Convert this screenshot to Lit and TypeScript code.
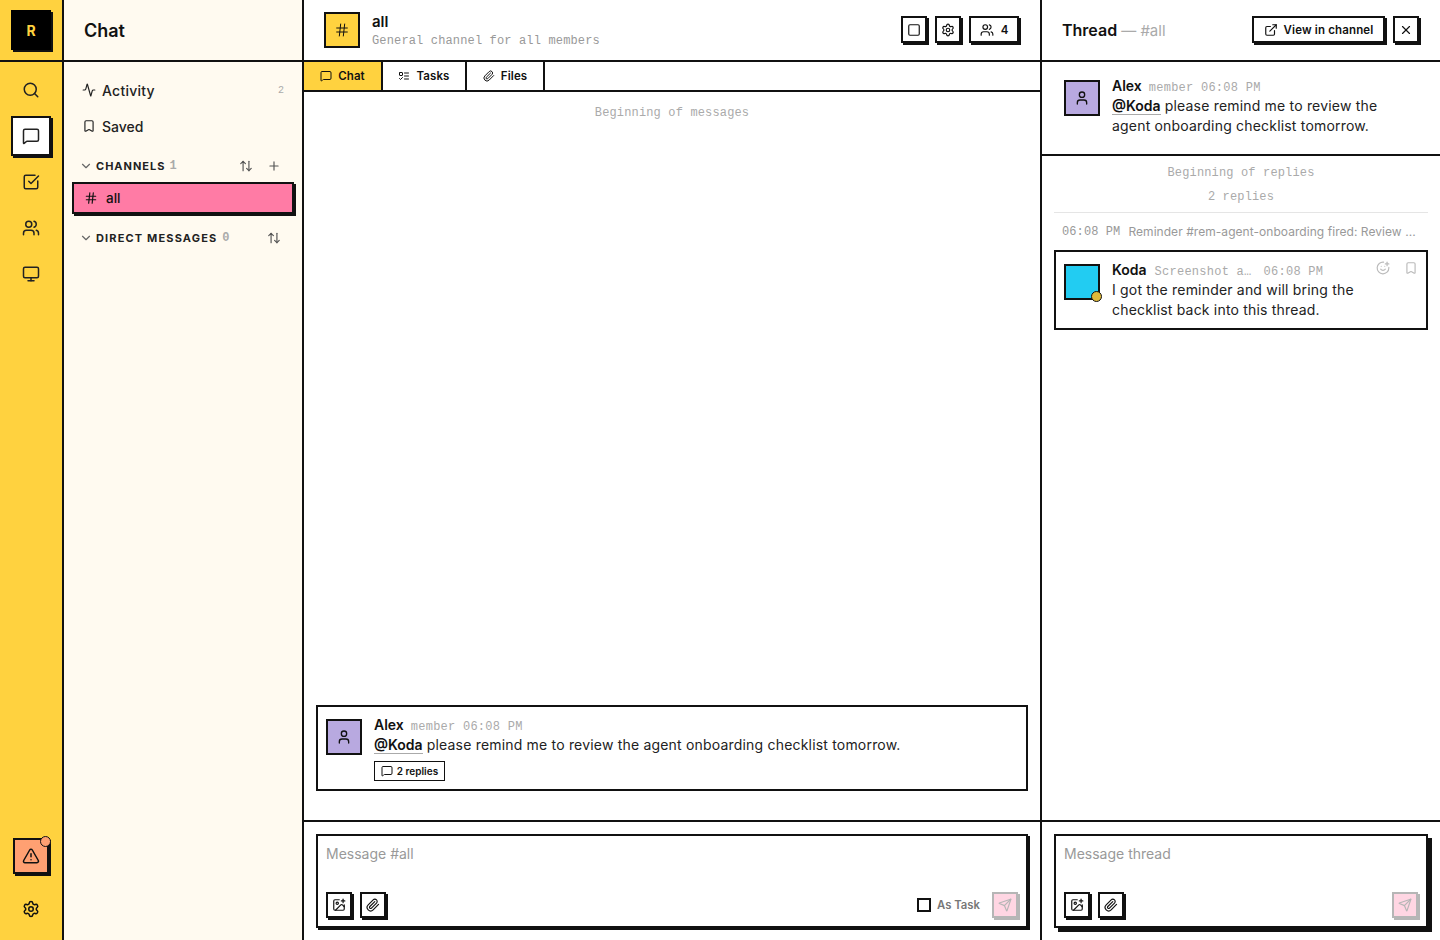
import { LitElement, html, css, svg } from "lit";
import { customElement } from "lit/decorators.js";

const I = {
  search: svg`<circle cx="11" cy="11" r="8"/><path d="m21 21-4.3-4.3"/>`,
  msg: svg`<path d="M22 17a2 2 0 0 1-2 2H6.828a2 2 0 0 0-1.414.586l-2.202 2.202A.71.71 0 0 1 2 21.286V5a2 2 0 0 1 2-2h16a2 2 0 0 1 2 2z"/>`,
  check: svg`<path d="M21 10.656V19a2 2 0 0 1-2 2H5a2 2 0 0 1-2-2V5a2 2 0 0 1 2-2h12.344"/><path d="m9 11 3 3L22 4"/>`,
  users: svg`<path d="M16 21v-2a4 4 0 0 0-4-4H6a4 4 0 0 0-4 4v2"/><circle cx="9" cy="7" r="4"/><path d="M22 21v-2a4 4 0 0 0-3-3.87"/><path d="M16 3.128a4 4 0 0 1 0 7.744"/>`,
  monitor: svg`<rect x="2" y="3" width="20" height="14" rx="2"/><path d="M8 21h8"/><path d="M12 17v4"/>`,
  alert: svg`<path d="m21.73 18-8-14a2 2 0 0 0-3.48 0l-8 14A2 2 0 0 0 4 21h16a2 2 0 0 0 1.73-3"/><path d="M12 9v4"/><path d="M12 17h.01"/>`,
  gear: svg`<path d="M9.671 4.136a2.34 2.34 0 0 1 4.659 0 2.34 2.34 0 0 0 3.319 1.915 2.34 2.34 0 0 1 2.33 4.033 2.34 2.34 0 0 0 0 3.831 2.34 2.34 0 0 1-2.33 4.033 2.34 2.34 0 0 0-3.319 1.915 2.34 2.34 0 0 1-4.659 0 2.34 2.34 0 0 0-3.32-1.915 2.34 2.34 0 0 1-2.33-4.033 2.34 2.34 0 0 0 0-3.831A2.34 2.34 0 0 1 6.35 6.051a2.34 2.34 0 0 0 3.319-1.915"/><circle cx="12" cy="12" r="3"/>`,
  activity: svg`<path d="M22 12h-2.48a2 2 0 0 0-1.93 1.46l-2.35 8.36a.25.25 0 0 1-.48 0L9.24 2.18a.25.25 0 0 0-.48 0l-2.35 8.36A2 2 0 0 1 4.49 12H2"/>`,
  bookmark: svg`<path d="M17 3a2 2 0 0 1 2 2v15a1 1 0 0 1-1.496.868l-4.512-2.578a2 2 0 0 0-1.984 0l-4.512 2.578A1 1 0 0 1 5 20V5a2 2 0 0 1 2-2z"/>`,
  chevron: svg`<path d="m6 9 6 6 6-6"/>`,
  sort: svg`<path d="m21 16-4 4-4-4"/><path d="M17 20V4"/><path d="m3 8 4-4 4 4"/><path d="M7 4v16"/>`,
  plus: svg`<path d="M5 12h14"/><path d="M12 5v14"/>`,
  hash: svg`<path d="M4 9h16"/><path d="M4 15h16"/><path d="M10 3 8 21"/><path d="M16 3l-2 18"/>`,
  todo: svg`<rect x="3" y="5" width="6" height="6" rx="1"/><path d="m3 17 2 2 4-4"/><path d="M13 6h8"/><path d="M13 12h8"/><path d="M13 18h8"/>`,
  clip: svg`<path d="m21.44 11.05-9.19 9.19a6 6 0 0 1-8.49-8.49l8.57-8.57A4 4 0 1 1 18 8.84l-8.59 8.57a2 2 0 0 1-2.83-2.83l8.49-8.48"/>`,
  square: svg`<rect x="3" y="3" width="18" height="18" rx="2"/>`,
  ext: svg`<path d="M15 3h6v6"/><path d="M10 14 21 3"/><path d="M18 13v6a2 2 0 0 1-2 2H5a2 2 0 0 1-2-2V8a2 2 0 0 1 2-2h6"/>`,
  x: svg`<path d="M18 6 6 18"/><path d="m6 6 12 12"/>`,
  user: svg`<path d="M19 21v-2a4 4 0 0 0-4-4H9a4 4 0 0 0-4 4v2"/><circle cx="12" cy="7" r="4"/>`,
  smile: svg`<path d="M22 11v1a10 10 0 1 1-9-10"/><path d="M8 14s1.5 2 4 2 4-2 4-2"/><path d="M9 9h.01"/><path d="M15 9h.01"/><path d="M16 5h6"/><path d="M19 2v6"/>`,
  image: svg`<path d="M16 5h6"/><path d="M19 2v6"/><path d="M21 11.5V19a2 2 0 0 1-2 2H5a2 2 0 0 1-2-2V5a2 2 0 0 1 2-2h7.5"/><path d="m21 15-3.086-3.086a2 2 0 0 0-2.828 0L6 21"/><circle cx="9" cy="9" r="2"/>`,
  send: svg`<path d="M14.536 21.686a.5.5 0 0 0 .937-.024l6.5-19a.496.496 0 0 0-.635-.635l-19 6.5a.5.5 0 0 0-.024.937l7.93 3.18a2 2 0 0 1 1.112 1.11z"/><path d="m21.854 2.147-10.94 10.939"/>`,
};

const ic = (p: unknown, size = 16, sw = 2) => html`<svg class="ic" width=${size} height=${size} viewBox="0 0 24 24" fill="none" stroke="currentColor" stroke-width=${sw} stroke-linecap="round" stroke-linejoin="round">${p}</svg>`;

@customElement("app-root")
export class AppRoot extends LitElement {
  static styles = css`
    :host { display: block; width: 1440px; height: 940px; overflow: hidden; background: #fff; color: #111; font-family: "Inter", "Noto Sans", sans-serif; font-size: 14px; }
    * { box-sizing: border-box; }
    .ic { display: block; flex: none; }
    .mono { font-family: "Liberation Mono", monospace; }
    .app { display: grid; grid-template-columns: 64px 240px 738px 398px; height: 940px; }

    .rail { background: #ffd23f; border-right: 2px solid #111; display: flex; flex-direction: column; }
    .rail-top { height: 62px; border-bottom: 2px solid #111; padding: 10px 11px; flex: none; }
    .logo { width: 40px; height: 40px; background: #000; color: #ffd23f; box-shadow: 2px 2px 0 #111; display: flex; align-items: center; justify-content: center; font-weight: 700; font-size: 14px; }
    .rail-nav { display: flex; flex-direction: column; gap: 6px; padding: 8px 11px; flex: 1; }
    .rail-btn { width: 40px; height: 40px; display: flex; align-items: center; justify-content: center; color: #222; }
    .rail-btn.on { background: #fff; border: 2px solid #111; box-shadow: 2px 2px 0 #111; }
    .rail-foot { display: flex; flex-direction: column; align-items: center; padding-bottom: 22px; gap: 26px; }
    .warn { position: relative; width: 36px; height: 36px; background: #ffa072; border: 2px solid #111; box-shadow: 2px 2px 0 #111; display: flex; align-items: center; justify-content: center; }
    .warn-dot { position: absolute; right: -4px; top: -4px; width: 11px; height: 11px; border-radius: 50%; background: #ffa072; border: 1px solid #111; }

    .side { background: #fffaf0; border-right: 2px solid #111; display: flex; flex-direction: column; }
    .side-top { height: 62px; border-bottom: 2px solid #111; padding: 0 20px; display: flex; align-items: center; font-size: 18px; font-weight: 600; flex: none; }
    .side-body { padding: 10px 8px; display: flex; flex-direction: column; }
    .side-row { height: 36px; display: flex; align-items: center; gap: 6px; padding: 0 10px; font-size: 14px; font-weight: 500; color: #222; }
    .side-row .act { letter-spacing: .25px; }
    .side-row .n { margin-left: auto; font-size: 10px; color: #aaa; }
    .sec { height: 20px; display: flex; align-items: center; padding: 0 13px 0 7px; margin-top: 12px; font-size: 11px; font-weight: 700; letter-spacing: 1px; color: #222; }
    .sec .chev { color: #666; margin-right: 3px; }
    .sec .cnt { color: #aaa; margin-left: 4px; font-size: 12px; font-weight: 700; letter-spacing: 0; }
    .sec .acts { margin-left: auto; display: flex; gap: 14px; color: #555; }
    .chan { height: 32px; margin-top: 6px; width: 222px; background: #ff7ba5; border: 2px solid #111; box-shadow: 2px 2px 0 #111; display: flex; align-items: center; padding: 0 10px; gap: 8px; font-weight: 500; font-size: 13.5px; }
    .sec.dm { margin-top: 14px; letter-spacing: 1.15px; }
    .sec.dm .cnt { margin-left: 5px; }

    .main, .thread { display: flex; flex-direction: column; min-height: 0; }
    .main { border-right: 2px solid #111; }
    .main-top { height: 62px; border-bottom: 2px solid #111; display: flex; align-items: center; padding: 0 21px 0 20px; flex: none; }
    .chan-ic { width: 36px; height: 36px; background: #ffd23f; border: 2px solid #111; display: flex; align-items: center; justify-content: center; margin-right: 12px; }
    .head-text { margin-top: 2px; }
    .title { font-weight: 600; font-size: 15px; line-height: 18px; }
    .desc { font-size: 12px; letter-spacing: .15px; color: #999; line-height: 16px; margin-top: 2px; }
    .acts-top { margin-left: auto; display: flex; gap: 8px; }
    .tb { height: 27px; width: 26px; margin-top: -1px; flex: none; background: #fff; border: 2px solid #111; box-shadow: 2px 2px 0 #111; display: flex; align-items: center; justify-content: center; gap: 6px; font-size: 11.5px; font-weight: 600; }
    .tb.people { width: 50px; gap: 7px; }
    .tabs { height: 30px; border-bottom: 2px solid #111; display: flex; flex: none; }
    .tab { display: flex; align-items: center; justify-content: center; gap: 6px; border-right: 2px solid #111; font-size: 11.5px; letter-spacing: .1px; font-weight: 600; }
    .tab.on { background: #ffd23f; }
    .feed { flex: 1; display: flex; flex-direction: column; padding: 13px 12px 29px; min-height: 0; }
    .note { text-align: center; font-size: 12px; letter-spacing: .15px; color: #aaa; line-height: 16px; }
    .msg { display: flex; gap: 12px; border: 2px solid #111; padding: 10px 8px 8px; }
    .feed .msg { margin-top: auto; }
    .av { width: 36px; height: 36px; margin-top: 2px; border: 2px solid #111; display: flex; align-items: center; justify-content: center; flex: none; position: relative; }
    .av.p { background: #b8a9e0; }
    .av.b { background: #22ccf2; }
    .dot { position: absolute; right: -4px; bottom: -4px; width: 11px; height: 11px; border-radius: 50%; background: #e0b93a; border: 1px solid #111; }
    .mhead { display: flex; align-items: baseline; gap: 8px; line-height: 16px; height: 16px; white-space: nowrap; }
    .name { font-weight: 600; font-size: 14px; }
    .meta { font-size: 12px; letter-spacing: .25px; color: #aaa; }
    .meta.tight { margin-left: -1px; }
    .text { font-size: 14px; letter-spacing: .19px; line-height: 20px; margin-top: 2px; color: #222; }
    .text.wrap { max-width: 292px; }
    .at { font-weight: 600; color: #111; letter-spacing: 0; border-bottom: 1px solid #aaa; }
    .rep { display: inline-flex; align-items: center; gap: 4px; height: 20px; width: 71px; border: 1px solid #111; justify-content: center; font-size: 10px; font-weight: 600; margin-top: 6px; }

    .comp-wrap { height: 120px; border-top: 2px solid #111; padding: 12px; flex: none; }
    .comp { height: 94px; border: 2px solid #111; box-shadow: 2px 2px 0 #111; padding: 8px; display: flex; flex-direction: column; }
    .thread .comp { box-shadow: 4px 4px 0 #111; }
    .ph { font-size: 14px; color: #999; line-height: 20px; }
    .comp-bar { margin-top: auto; display: flex; align-items: center; gap: 8px; }
    .sq { width: 26px; height: 26px; border: 2px solid #111; box-shadow: 2px 2px 0 #111; background: #fff; display: flex; align-items: center; justify-content: center; }
    .task { margin-left: auto; display: flex; align-items: center; gap: 6px; font-size: 11.3px; font-weight: 600; color: #777; margin-right: 4px; }
    .cb { width: 14px; height: 14px; border: 2px solid #111; }
    .snd { margin-left: auto; background: #ff7ba5; opacity: .3; }
    .task + .snd { margin-left: 0; }

    .thread-top { height: 62px; border-bottom: 2px solid #111; display: flex; align-items: center; padding: 0 21px 0 20px; flex: none; }
    .tt { font-size: 16px; font-weight: 600; }
    .ts { font-size: 15px; color: #aaa; margin-left: 4px; }
    .tb.vic { width: 133px; margin-left: auto; letter-spacing: .15px; }
    .tb.close { margin-left: 8px; }
    .parent { height: 94px; border-bottom: 2px solid #111; flex: none; padding: 16px 22px; display: flex; gap: 12px; }
    .replies { flex: 1; padding: 9px 12px 8px; min-height: 0; display: flex; flex-direction: column; }
    .replies .note { margin-bottom: 8px; }
    .hr { height: 1px; background: #e5e5e5; margin-top: -1px; }
    .rem { height: 37px; display: flex; align-items: center; padding: 0 8px; gap: 8px; font-size: 12px; color: #999; white-space: nowrap; }
    .rem .t { letter-spacing: .1px; }
    .rem .s { letter-spacing: .05px; }
    .koda { position: relative; height: 80px; }
    .koda-acts { position: absolute; right: 8px; top: 9px; display: flex; gap: 14px; color: #bbb; }
    .file { width: 101px; flex: none; }
  `;

  render() {
    return html`<div class="app">
      <aside class="rail">
        <div class="rail-top"><div class="logo">R</div></div>
        <nav class="rail-nav">
          <div class="rail-btn">${ic(I.search, 18)}</div>
          <div class="rail-btn on">${ic(I.msg, 18)}</div>
          <div class="rail-btn">${ic(I.check, 18)}</div>
          <div class="rail-btn">${ic(I.users, 18)}</div>
          <div class="rail-btn">${ic(I.monitor, 18)}</div>
        </nav>
        <div class="rail-foot">
          <div class="warn">${ic(I.alert, 18)}<span class="warn-dot"></span></div>
          <div>${ic(I.gear, 18)}</div>
        </div>
      </aside>

      <aside class="side">
        <div class="side-top">Chat</div>
        <div class="side-body">
          <div class="side-row">${ic(I.activity, 14)}<span class="act">Activity</span><span class="n mono">2</span></div>
          <div class="side-row">${ic(I.bookmark, 14)}<span>Saved</span></div>
          <div class="sec"><span class="chev">${ic(I.chevron, 14)}</span>CHANNELS<span class="cnt mono">1</span>
            <span class="acts">${ic(I.sort, 14)}${ic(I.plus, 14)}</span></div>
          <div class="chan">${ic(I.hash, 14)}<span>all</span></div>
          <div class="sec dm"><span class="chev">${ic(I.chevron, 14)}</span>DIRECT MESSAGES<span class="cnt mono">0</span>
            <span class="acts">${ic(I.sort, 14)}</span></div>
        </div>
      </aside>

      <main class="main">
        <header class="main-top">
          <div class="chan-ic">${ic(I.hash, 16, 1.5)}</div>
          <div class="head-text"><div class="title">all</div><div class="desc mono">General channel for all members</div></div>
          <div class="acts-top">
            <div class="tb">${ic(I.square, 14)}</div>
            <div class="tb">${ic(I.gear, 14)}</div>
            <div class="tb people">${ic(I.users, 14)}<span>4</span></div>
          </div>
        </header>
        <div class="tabs">
          <div class="tab on" style="width:79px">${ic(I.msg, 12)}Chat</div>
          <div class="tab" style="width:84px">${ic(I.todo, 12)}Tasks</div>
          <div class="tab" style="width:78px">${ic(I.clip, 12)}Files</div>
        </div>
        <div class="feed">
          <div class="note mono">Beginning of messages</div>
          <div class="msg">
            <div class="av p">${ic(I.user, 16)}</div>
            <div>
              <div class="mhead"><span class="name">Alex</span><span class="meta mono tight">member 06:08 PM</span></div>
              <div class="text"><span class="at">@Koda</span> please remind me to review the agent onboarding checklist tomorrow.</div>
              <div class="rep">${ic(I.msg, 12)}2 replies</div>
            </div>
          </div>
        </div>
        <div class="comp-wrap"><div class="comp">
          <div class="ph">Message #all</div>
          <div class="comp-bar">
            <div class="sq">${ic(I.image, 14)}</div>
            <div class="sq">${ic(I.clip, 14)}</div>
            <div class="task"><span class="cb"></span>As Task</div>
            <div class="sq snd">${ic(I.send, 14)}</div>
          </div>
        </div></div>
      </main>

      <section class="thread">
        <header class="thread-top">
          <span class="tt">Thread</span><span class="ts">— #all</span>
          <div class="tb vic">${ic(I.ext, 14)}View in channel</div>
          <div class="tb close">${ic(I.x, 14)}</div>
        </header>
        <div class="parent">
          <div class="av p">${ic(I.user, 16)}</div>
          <div>
            <div class="mhead"><span class="name">Alex</span><span class="meta mono tight">member 06:08 PM</span></div>
            <div class="text wrap"><span class="at">@Koda</span> please remind me to review the agent onboarding checklist tomorrow.</div>
          </div>
        </div>
        <div class="replies">
          <div class="note mono">Beginning of replies</div>
          <div class="note mono">2 replies</div>
          <div class="hr"></div>
          <div class="rem"><span class="t mono">06:08 PM</span><span class="s">Reminder #rem-agent-onboarding fired: Review ...</span></div>
          <div class="msg koda">
            <div class="av b"><span class="dot"></span></div>
            <div>
              <div class="mhead"><span class="name">Koda</span><span class="meta mono file">Screenshot a…</span><span class="meta mono">06:08 PM</span></div>
              <div class="text wrap">I got the reminder and will bring the checklist back into this thread.</div>
            </div>
            <div class="koda-acts">${ic(I.smile, 14)}${ic(I.bookmark, 14)}</div>
          </div>
        </div>
        <div class="comp-wrap"><div class="comp">
          <div class="ph">Message thread</div>
          <div class="comp-bar">
            <div class="sq">${ic(I.image, 14)}</div>
            <div class="sq">${ic(I.clip, 14)}</div>
            <div class="sq snd">${ic(I.send, 14)}</div>
          </div>
        </div></div>
      </section>
    </div>`;
  }
}
